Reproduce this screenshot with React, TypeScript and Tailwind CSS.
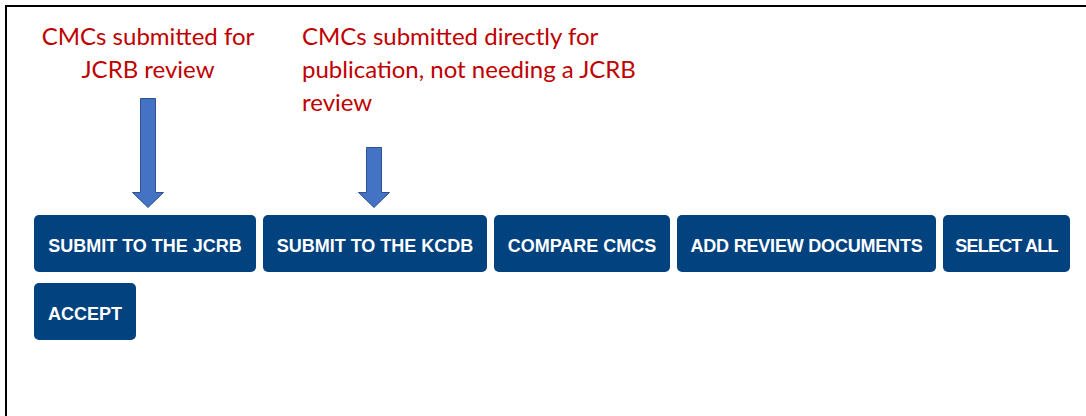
const buttons = [
  { label: "SUBMIT TO THE JCRB", w: "w-[222px]" },
  { label: "SUBMIT TO THE KCDB", w: "w-[224px]" },
  { label: "COMPARE CMCS", w: "w-[176px]" },
  { label: "ADD REVIEW DOCUMENTS", w: "w-[259px] tracking-[-0.2px]" },
  { label: "SELECT ALL", w: "w-[127px] tracking-[-0.8px]" },
  { label: "ACCEPT", w: "w-[102px]" },
];

function DownArrow({ height }: { height: number }) {
  // block arrow as drawn in the slide: shaft 15px wide, head 32px wide, 15px tall
  const head = 15;
  return (
    <svg width="34" height={height} viewBox={`0 0 34 ${height}`}>
      <path
        d={`M9.5 0.5 H24.5 V${height - head - 0.5} H32.5 L17 ${height - 0.5} L1.5 ${height - head - 0.5} H9.5 Z`}
        fill="#4472c4"
        stroke="#2f528f"
        strokeWidth="1"
      />
    </svg>
  );
}

export default function App() {
  return (
    <div className="w-[1086px] h-[416px] bg-white pt-[5px] pl-[5px] overflow-hidden">
      <div className="h-full border-t-2 border-l-2 border-black pl-[27px]">
        <div className="flex h-[201px] font-['Lato',sans-serif] text-[24px] leading-[33px] text-[#c00000]">
          <div className="w-[228px] flex flex-col items-center pt-[12px]">
            <p className="text-center">
              CMCs submitted for
              <br />
              JCRB review
            </p>
            <div className="mt-auto">
              <DownArrow height={110} />
            </div>
          </div>
          <div className="ml-[40px] flex flex-col pt-[12px]">
            <p>
              CMCs submitted directly for
              <br />
              publication, not needing a JCRB
              <br />
              review
            </p>
            <div className="mt-auto ml-[55px]">
              <DownArrow height={61} />
            </div>
          </div>
        </div>
        <div className="mt-[7px] flex flex-wrap w-[1045px] gap-x-[7px] gap-y-[11px]">
          {buttons.map((b) => (
            <button
              key={b.label}
              className={`${b.w} h-[57px] pt-[5px] rounded-[5px] bg-[#02427f] text-white font-['Liberation_Sans',Arial,sans-serif] font-bold text-[18px] flex items-center justify-center whitespace-nowrap`}
            >
              {b.label}
            </button>
          ))}
        </div>
      </div>
    </div>
  );
}
